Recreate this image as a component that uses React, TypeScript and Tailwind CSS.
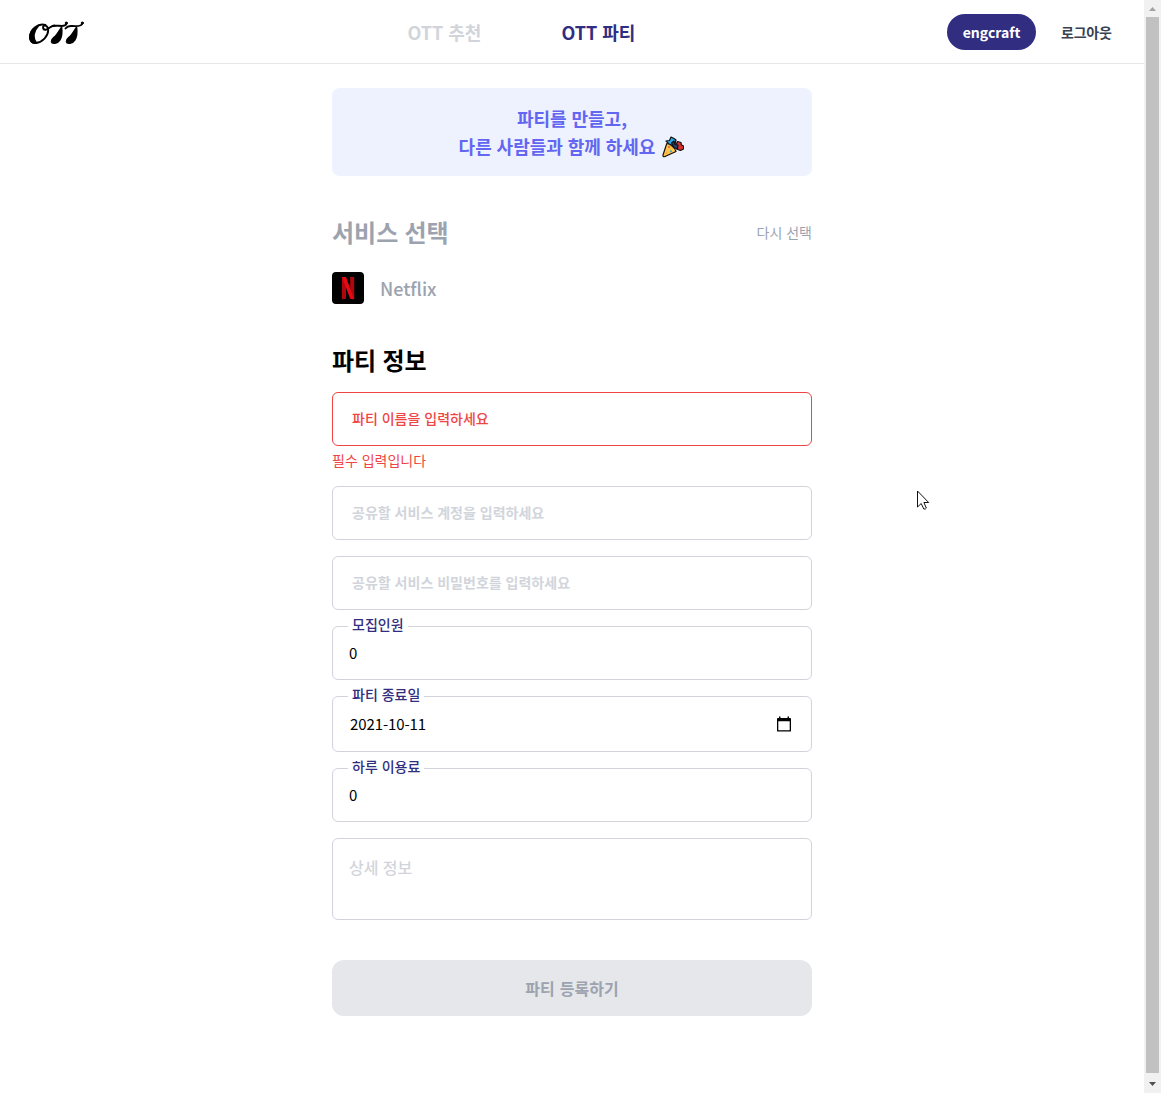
import React from "react";

function Logo() {
  return (
    <svg className="ml-7 h-[26px] w-[58px]" viewBox="0 0 58 26" fill="none" stroke="#000" strokeLinecap="round" strokeLinejoin="round">
      <path d="M17.500 6C10 3.500 2.500 10.500 2 17.500c-.3 4.500 2.200 7 6 6.500 6.500-.7 12-7 12.200-12.500.1-3-1.500-5-3.400-5-2.600 0-2.300 4.500.7 4.200 3.500-.3 5.500-4.200 9-4.200" strokeWidth="1.900" />
      <path d="M10 7.500C6 11.500 4 18.500 8.500 24 4 25.200 1.300 21.500 2 16.500 2.600 13 5.500 9 10 7.500Z" fill="#000" strokeWidth="1.600" />
      <path d="M25 7c4-.9 7 .4 10.500-.2 2-.3 3-1.300 3-2.800M37.500 9.500c1.500-2 3.500-2.700 6.500-2.500 5 .4 10.200.6 10.500-3" strokeWidth="1.900" />
      <path d="M33.500 8.500c.6 4.500.3 9-1.800 12.500-2.200 3.600-7.700 4.200-8.200 1.500-.4-2.500 2.800-3.500 5-6.500 1.800-2.300 3.300-4.800 5-7.500ZM48.500 8.500c.6 4.500.3 9-1.800 12.500-2.200 3.600-7.700 4.200-8.200 1.500-.4-2.500 2.800-3.500 5-6.500 1.800-2.300 3.300-4.800 5-7.500Z" fill="#000" strokeWidth="1.700" />
      <circle cx="38.300" cy="4" r="1.100" fill="#000" strokeWidth=".8" />
      <circle cx="54.300" cy="4" r="1.100" fill="#000" strokeWidth=".8" />
    </svg>
  );
}

function PartyPopper() {
  return (
    <svg className="mt-[2px] ml-[7px] h-[22px] w-[22px]" viewBox="0 0 22 22" stroke="#111" strokeWidth="1.200" strokeLinejoin="round">
      <path d="m4 5 3.500-.5L9 1l3 1.500L14 4l-1 4-3 1.500L7 8Z" fill="#28a8ea" />
      <path d="m14 9 1.500-3.500 3.500 1 .3 2.300 2.200 1.200v3l-3 1.500-4-1.500Z" fill="#df2f2d" />
      <path d="m9.500 7 2.500-2 1 3.500 3 .5-.5 3.500L12 12Z" fill="#24426d" />
      <path d="M4.800 7.500C8.500 8 13 11.500 14 15.500L3 20.500C1.500 21.200.7 20.400 1 19Z" fill="#ffc247" />
      <g stroke="none">
        <circle cx="7" cy="11" r="1" fill="#e85a34" />
        <circle cx="9" cy="15.300" r="1.100" fill="#37a7dc" />
        <circle cx="4.500" cy="17" r=".8" fill="#e8a034" />
        <circle cx="11.800" cy="14" r=".8" fill="#fff0a0" />
      </g>
    </svg>
  );
}

function NetflixIcon() {
  return (
    <svg className="h-8 w-8 rounded" viewBox="0 0 32 32">
      <path fill="#000" d="M0 0h32v32H0z" />
      <path fill="#b1060f" d="M10 5h4v21.700l-4 .5ZM18.200 5h4v22.200l-4-.5Z" />
      <path fill="#e50914" d="M10 5h4l8.200 22.200-4-.5Z" />
    </svg>
  );
}

function CalendarIcon() {
  return (
    <svg className="mr-5 h-4 w-[14px]" viewBox="0 0 14 16">
      <path fill="#000" fillRule="evenodd" d="M2 .5h1.500V2h7V.5H12V2h1.200q.8 0 .8.800v11.900q0 .9-.8.900H.8q-.8 0-.8-.9V2.800Q0 2 .8 2H2ZM1.300 5.300v8.900h11.400V5.300Z" />
    </svg>
  );
}

function Placeholder({ text, tone }: { text: string; tone: string }) {
  return (
    <div className={`flex h-[54px] items-center rounded-md border pl-[19px] text-sm ${tone}`}>
      <span className="-mt-[2px]">{text}</span>
    </div>
  );
}

function Field({ label, value, size, trailing }: { label: string; value: string; size: string; trailing?: React.ReactNode }) {
  return (
    <div className={`relative mt-4 flex items-center justify-between rounded-md border border-[#d1d5db] text-[15px] tracking-[-0.1px] ${size}`}>
      <span className="absolute -top-[13px] left-[15px] bg-white px-1 text-sm leading-5 font-medium tracking-normal text-[#312e81]">{label}</span>
      <span>{value}</span>
      {trailing}
    </div>
  );
}

function Scrollbar() {
  return (
    <div className="flex w-[17px] flex-col items-center justify-between bg-[#f1f1f1]">
      <svg className="h-[17px] w-[17px] shrink-0" viewBox="0 0 17 17"><path fill="#a3a3a3" d="M5 11h7L8.500 7Z" /></svg>
      <div className="w-[13px] flex-1 bg-[#c1c1c1]" />
      <svg className="mt-[3px] h-[17px] w-[17px] shrink-0" viewBox="0 0 17 17"><path fill="#505050" d="M5 6h7l-3.500 4Z" /></svg>
    </div>
  );
}

export default function App() {
  return (
    <div className="relative flex h-[1093px] w-[1161px] overflow-hidden bg-white font-['Noto_Sans_CJK_KR','Noto_Sans',sans-serif] [word-spacing:0.8px] text-black">
      <div className="flex-1">
        <header className="flex h-16 items-center border-b border-[#e5e7eb]">
          <Logo />
          <nav className="ml-[321.5px] flex w-[479.5px] gap-20 text-lg font-bold whitespace-nowrap">
            <span className="w-[74px] text-[#d1d5db]">OTT 추천</span>
            <span className="text-[#312e81]">OTT 파티</span>
          </nav>
          <div className="ml-[60px] flex items-center whitespace-nowrap">
            <span className="flex h-9 w-[89px] items-center justify-center rounded-full bg-[#312e81] text-sm font-bold text-white">engcraft</span>
            <span className="ml-[25px] text-sm font-bold tracking-[-0.2px] text-[#374151]">로그아웃</span>
          </div>
        </header>
        <main className="mx-auto w-[480px] pt-6">
          <div className="flex h-[88px] flex-col items-center justify-center rounded-lg bg-[#eef2ff] text-lg leading-7 font-bold text-[#6366f1]">
            <div>파티를 만들고,</div>
            <div className="-ml-px flex items-center">다른 사람들과 함께 하세요<PartyPopper /></div>
          </div>
          <div className="mt-10 flex h-8 items-center justify-between text-[#9ca3af]">
            <h2 className="text-2xl font-bold">서비스 선택</h2>
            <span className="-mt-px text-sm">다시 선택</span>
          </div>
          <div className="mt-6 flex h-8 items-center text-[#9ca3af]">
            <NetflixIcon />
            <span className="ml-4 text-lg font-medium">Netflix</span>
          </div>
          <h2 className="mt-10 text-2xl font-bold">파티 정보</h2>
          <div className="mt-4">
            <Placeholder text="파티 이름을 입력하세요" tone="border-[#ef4444] text-[#ef4444] font-medium" />
            <p className="mt-1 text-sm text-[#ef4444]">필수 입력입니다</p>
          </div>
          <div className="mt-4 flex flex-col gap-4">
            <Placeholder text="공유할 서비스 계정을 입력하세요" tone="border-[#d1d5db] text-[#d1d5db] font-bold" />
            <Placeholder text="공유할 서비스 비밀번호를 입력하세요" tone="border-[#d1d5db] text-[#d1d5db] font-bold" />
          </div>
          <Field label="모집인원" value="0" size="h-[54px] pl-4" />
          <Field label="파티 종료일" value="2021-10-11" size="h-[56px] pl-[17px]" trailing={<CalendarIcon />} />
          <Field label="하루 이용료" value="0" size="h-[54px] pl-4" />
          <div className="mt-4 h-[82px] rounded-md border border-[#d1d5db] px-4 pt-4 text-base font-medium text-[#d1d5db]">상세 정보</div>
          <button className="mt-10 h-14 w-full rounded-xl bg-[#e5e7eb] text-base font-bold text-[#9ca3af] [word-spacing:1.5px]">파티 등록하기</button>
        </main>
      </div>
      <Scrollbar />
      <svg className="absolute top-[490px] left-[917px] h-[21px] w-[13px]" viewBox="0 0 13 21">
        <path d="M.5 1v16l3.700-3.500L6.800 19q1.800.6 2.500-.9L6.900 12.500h4.800Z" fill="#fff" stroke="#111" strokeWidth="1" />
      </svg>
    </div>
  );
}
